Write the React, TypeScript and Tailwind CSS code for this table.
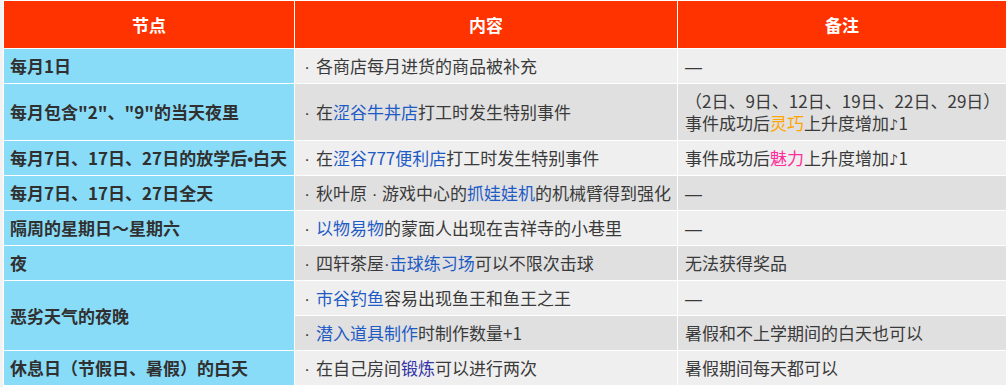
import React from "react";

const B = ({ children }: { children: React.ReactNode }) => (
  <span className="text-[#1f5bc4]">{children}</span>
);

const L = ({ children, className = "" }: { children: React.ReactNode; className?: string }) => (
  <span className={`font-['Liberation_Sans',sans-serif] leading-none ${className}`}>{children}</span>
);

const Lead = () => (
  <span className="inline-block w-[10px] mr-[4px] text-center leading-none font-['Liberation_Sans',sans-serif]">·</span>
);

const Note = () => <span className="font-['DejaVu_Sans',sans-serif] text-[15px] leading-none">♪</span>;
const Dash = () => <L>—</L>;

const light = "bg-[#efefef]";
const dark = "bg-[#e0e0e0]";

function Key({ children, className = "" }: { children: React.ReactNode; className?: string }) {
  return (
    <div className={`flex items-center bg-[#89dcf8] px-[6px] font-bold leading-[22px] text-[#303030] whitespace-nowrap ${className}`}>
      <div>{children}</div>
    </div>
  );
}

function Cell({ children, bg, className = "" }: { children: React.ReactNode; bg: string; className?: string }) {
  return (
    <div className={`flex items-center ${bg} px-[7px] leading-[22px] text-[#3a3a3a] whitespace-nowrap ${className}`}>
      <div>{children}</div>
    </div>
  );
}

export default function App() {
  return (
    <div
      className="flex w-[1006px] h-[387px] bg-white overflow-hidden text-[17px]"
      style={{ fontFamily: '"Noto Sans CJK SC", "Noto Sans", sans-serif' }}
    >
      <div className="w-[3px] shrink-0 bg-[#f2f2f2]" />
      <div className="pt-px pl-px bg-white">
        <div className="grid grid-cols-[290px_382px_328px] grid-rows-[47px_34px_56px_34px_34px_34px_34px_34px_34px_34px] gap-px bg-white">
          <div className="flex items-center justify-center bg-[#ff3300] text-white font-bold">节点</div>
          <div className="flex items-center justify-center bg-[#ff3300] text-white font-bold">内容</div>
          <div className="flex items-center justify-center bg-[#ff3300] text-white font-bold">备注</div>

          <Key>每月1日</Key>
          <Cell bg={light}><Lead />各商店每月进货的商品被补充</Cell>
          <Cell bg={light}><Dash /></Cell>

          <Key>每月包含"2"、"9"的当天夜里</Key>
          <Cell bg={dark}><Lead />在<B>涩谷牛丼店</B>打工时发生特别事件</Cell>
          <Cell bg={dark}>
            （2日、9日、12日、19日、22日、29日）
            <br />
            事件成功后<span className="text-[#ffa500]">灵巧</span>上升度增加<Note />1
          </Cell>

          <Key>每月7日、17日、27日的放学后<L>•</L>白天</Key>
          <Cell bg={light}><Lead />在<B>涩谷777便利店</B>打工时发生特别事件</Cell>
          <Cell bg={light}>事件成功后<span className="text-[#ff2d9b]">魅力</span>上升度增加<Note />1</Cell>

          <Key>每月7日、17日、27日全天</Key>
          <Cell bg={dark}><Lead />秋叶原<L> · </L>游戏中心的<B>抓娃娃机</B>的机械臂得到强化</Cell>
          <Cell bg={dark}><Dash /></Cell>

          <Key>隔周的星期日～星期六</Key>
          <Cell bg={light}><Lead /><B>以物易物</B>的蒙面人出现在吉祥寺的小巷里</Cell>
          <Cell bg={light}><Dash /></Cell>

          <Key>夜</Key>
          <Cell bg={dark}><Lead />四轩茶屋<L>·</L><B>击球练习场</B>可以不限次击球</Cell>
          <Cell bg={dark}>无法获得奖品</Cell>

          <Key className="row-span-2">恶劣天气的夜晚</Key>
          <Cell bg={light}><Lead /><B>市谷钓鱼</B>容易出现鱼王和鱼王之王</Cell>
          <Cell bg={light}><Dash /></Cell>
          <Cell bg={dark}><Lead /><B>潜入道具制作</B>时制作数量+1</Cell>
          <Cell bg={dark}>暑假和不上学期间的白天也可以</Cell>

          <Key>休息日（节假日、暑假）的白天</Key>
          <Cell bg={light}><Lead />在自己房间<span className="text-[#3434a6]">锻炼</span>可以进行两次</Cell>
          <Cell bg={light}>暑假期间每天都可以</Cell>
        </div>
      </div>
    </div>
  );
}
